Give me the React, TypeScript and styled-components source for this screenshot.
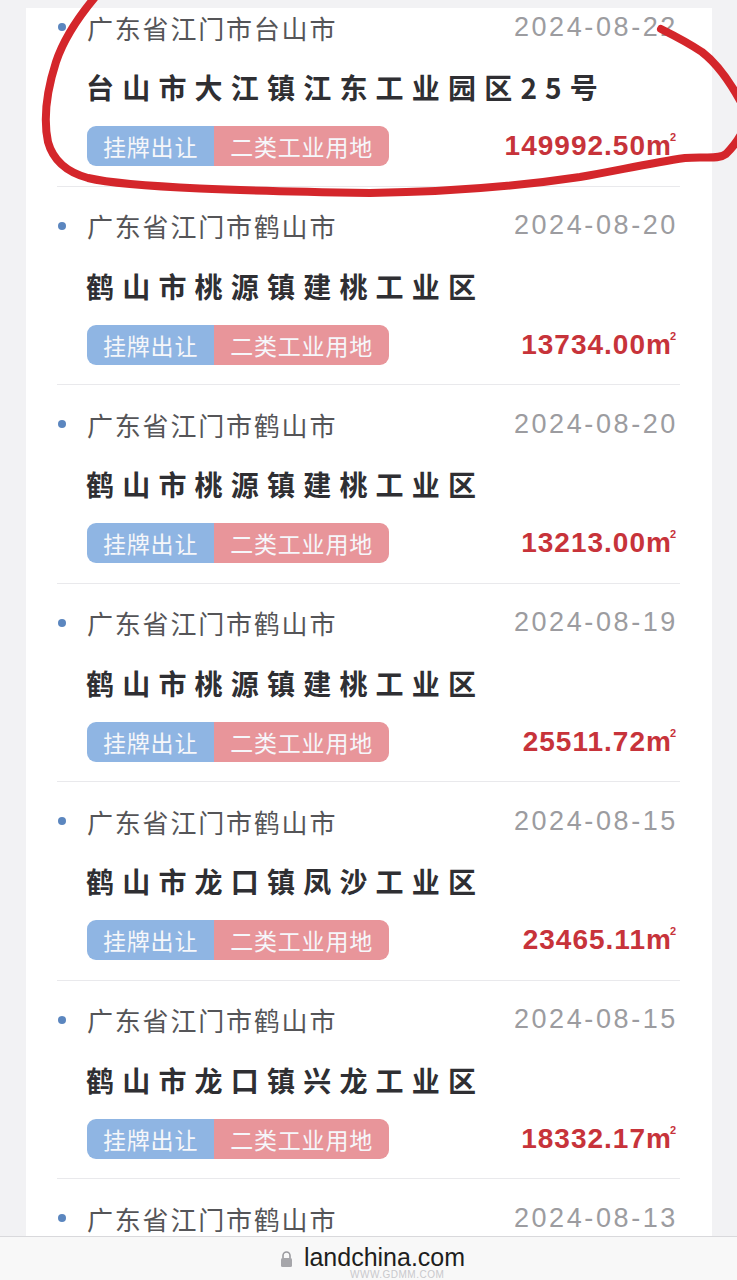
import React from 'react';
import styled, { createGlobalStyle } from 'styled-components';

const GlobalStyle = createGlobalStyle`
  html, body {
    margin: 0;
    padding: 0;
    background: #f2f2f4;
  }
  body {
    font-family: "Liberation Sans", "Noto Sans CJK SC", sans-serif;
  }
`;

const Page = styled.div`
  position: relative;
  height: 1280px;
  display: flex;
  flex-direction: column;
  overflow: hidden;
  background: #f2f2f4;
`;

const Scroll = styled.div`
  flex: 1;
  overflow: hidden;
  padding: 8px 25px 0 26px;
`;

const Panel = styled.ul`
  margin: 0;
  padding: 0 32px 0 31px;
  list-style: none;
  background: #fff;
`;

const Item = styled.li`
  padding: 20px 4px 19.5px 0;
  border-bottom: 1px solid #e9e9ec;

  &:first-child {
    padding-top: 0;
  }
`;

const Head = styled.div`
  display: flex;
  align-items: center;
  height: 38px;
`;

const Dot = styled.span`
  width: 8px;
  height: 8px;
  border-radius: 50%;
  background: #5b86bf;
  margin: 0 21px 0 1px;
  flex-shrink: 0;
`;

const Region = styled.span`
  flex: 1;
  font-family: "Noto Sans CJK SC", sans-serif;
  font-size: 26px;
  letter-spacing: 1.8px;
  color: #555558;
`;

const DateText = styled.span`
  font-family: "Liberation Sans", sans-serif;
  font-size: 27px;
  letter-spacing: 2.6px;
  margin-right: -2px;
  color: #9c9ca0;
`;

const Title = styled.div`
  margin: 19px 0 0 29px;
  height: 44px;
  line-height: 44px;
  font-family: "Noto Sans CJK SC", sans-serif;
  font-weight: 700;
  font-size: 28px;
  letter-spacing: 8.2px;
  color: #2f2f33;
`;

const Foot = styled.div`
  display: flex;
  align-items: center;
  justify-content: space-between;
  margin: 17px 0 0 30px;
`;

const Tags = styled.div`
  display: flex;
  height: 40px;
  border-radius: 9px;
  overflow: hidden;
`;

const Tag = styled.span<{ $tone: 'blue' | 'red' }>`
  display: flex;
  align-items: center;
  padding: 0 16px;
  font-family: "Noto Sans CJK SC", sans-serif;
  font-size: 23px;
  letter-spacing: 0.8px;
  color: #f6f7fa;
  background: ${(p) => (p.$tone === 'blue' ? '#8fb5e3' : '#e8959a')};
`;

const Area = styled.span`
  font-family: "Liberation Sans", sans-serif;
  font-weight: 700;
  font-size: 28px;
  letter-spacing: 1px;
  color: #c7333a;

  sup {
    font-size: 11px;
    letter-spacing: 0;
    vertical-align: 14px;
    margin-left: -2px;
  }
`;

const Bar = styled.div`
  position: relative;
  height: 43px;
  border-top: 1px solid #d9d9dc;
  background: #f8f8f8;
  display: flex;
  align-items: center;
  justify-content: center;
  gap: 11px;
  padding-left: 8px;
`;

const Url = styled.span`
  font-family: "Liberation Sans", sans-serif;
  font-size: 25px;
  color: #1e1e20;
  margin-top: -3px;
`;

const Watermark = styled.span`
  position: absolute;
  left: 350px;
  bottom: 0;
  font-family: "Liberation Sans", sans-serif;
  font-size: 10px;
  letter-spacing: 0.5px;
  color: #c8c8cc;
`;

const Scribble = styled.svg`
  position: absolute;
  left: 0;
  top: 0;
  pointer-events: none;
`;

type Row = {
  region: string;
  date: string;
  title: string;
  area: string;
};

const rows: Row[] = [
  { region: '广东省江门市台山市', date: '2024-08-22', title: '台山市大江镇江东工业园区25号', area: '149992.50' },
  { region: '广东省江门市鹤山市', date: '2024-08-20', title: '鹤山市桃源镇建桃工业区', area: '13734.00' },
  { region: '广东省江门市鹤山市', date: '2024-08-20', title: '鹤山市桃源镇建桃工业区', area: '13213.00' },
  { region: '广东省江门市鹤山市', date: '2024-08-19', title: '鹤山市桃源镇建桃工业区', area: '25511.72' },
  { region: '广东省江门市鹤山市', date: '2024-08-15', title: '鹤山市龙口镇凤沙工业区', area: '23465.11' },
  { region: '广东省江门市鹤山市', date: '2024-08-15', title: '鹤山市龙口镇兴龙工业区', area: '18332.17' },
  { region: '广东省江门市鹤山市', date: '2024-08-13', title: '鹤山市共和镇工业区', area: '12000.00' },
];

function LockIcon() {
  return (
    <svg width="13" height="18" viewBox="0 0 13 18">
      <path d="M3 8V5.5a3.5 3.5 0 0 1 7 0V8" fill="none" stroke="#9a9a9e" strokeWidth="1.6" />
      <rect x="1" y="8" width="11" height="9" rx="1.5" fill="#a6a6aa" />
    </svg>
  );
}

export default function App() {
  return (
    <>
      <GlobalStyle />
      <Page>
        <Scroll>
          <Panel>
            {rows.map((r, i) => (
              <Item key={i}>
                <Head>
                  <Dot />
                  <Region>{r.region}</Region>
                  <DateText>{r.date}</DateText>
                </Head>
                <Title>{r.title}</Title>
                <Foot>
                  <Tags>
                    <Tag $tone="blue">挂牌出让</Tag>
                    <Tag $tone="red">二类工业用地</Tag>
                  </Tags>
                  <Area>
                    {r.area}m<sup>2</sup>
                  </Area>
                </Foot>
              </Item>
            ))}
          </Panel>
        </Scroll>
        <Bar>
          <LockIcon />
          <Url>landchina.com</Url>
          <Watermark>WWW.GDMM.COM</Watermark>
        </Bar>
        <Scribble width="737" height="210" viewBox="0 0 737 210">
          <path
            d="M96,-4 C80,15 64,38 56,62 C47,90 43,118 48,142 C53,160 66,172 88,178 C130,188 250,191 370,193 C450,192 520,186 580,177 C620,170 650,163 685,158 C705,156 718,160 726,154 C734,146 740,138 744,128"
            fill="none"
            stroke="#d4262b"
            strokeWidth="8"
            strokeLinecap="round"
          />
          <path
            d="M661,29 C675,36 690,44 702,52 C715,62 728,78 742,104"
            fill="none"
            stroke="#d4262b"
            strokeWidth="8"
            strokeLinecap="round"
          />
        </Scribble>
      </Page>
    </>
  );
}
